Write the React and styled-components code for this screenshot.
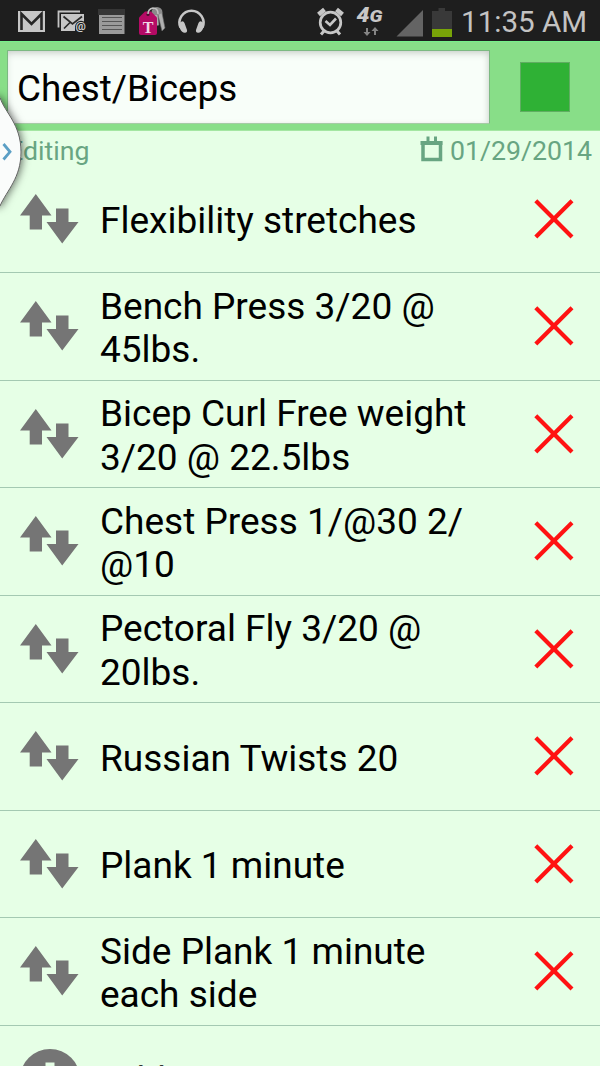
import React from "react";
import styled, { createGlobalStyle } from "styled-components";

const GlobalStyle = createGlobalStyle`
  * {
    box-sizing: border-box;
  }
  body {
    margin: 0;
    overflow: hidden;
    background: #e6ffe6;
    font-family: Roboto, sans-serif;
  }
`;

const Screen = styled.div`
  position: relative;
  width: 600px;
  height: 1066px;
  overflow: hidden;
  background: #e6ffe6;
`;

const StatusBar = styled.div`
  display: flex;
  justify-content: space-between;
  height: 41px;
  background: #1e1e1e;
`;

const StatusGroup = styled.div`
  display: flex;
  svg {
    display: block;
  }
`;

const Clock = styled.div`
  width: 139px;
  font-size: 29.6px;
  line-height: 44px;
  white-space: nowrap;
  color: #c3c3c3;
`;

const Header = styled.div`
  display: flex;
  align-items: flex-start;
  height: 90px;
  padding: 8px 30px 0 7px;
  border-top: 1px solid #77f08a;
  border-bottom: 1px solid #a4e6a2;
  background: #88de88;
`;

const TitleField = styled.div`
  width: 483px;
  height: 74px;
  padding-left: 9px;
  border: 1px solid #7cb982;
  border-bottom-color: #a5cba5;
  background: #f8fef9;
  box-shadow: inset 0 4px 9px -3px #bfc5c0, inset -3px 0 6px -2px #dde5de;
  font-size: 36.8px;
  line-height: 75px;
  white-space: nowrap;
  color: #000;
`;

const ColorSwatch = styled.div`
  width: 50px;
  height: 50px;
  margin: 12px 0 0 30px;
  border: 1px solid #60ad62;
  background: #2fb135;
`;

const SubHeader = styled.div`
  display: flex;
  justify-content: space-between;
  height: 34.6px;
  padding: 0 8px;
  font-size: 26.7px;
  line-height: 40px;
  color: #68a582;
`;

const DateLabel = styled.div`
  display: flex;
  gap: 7px;
  svg {
    margin-top: 4px;
  }
`;

const Row = styled.div`
  display: flex;
  align-items: center;
  height: 107.5px;
  padding: 0 25px 0 20px;
  border-bottom: 1px solid #a4c9b2;
`;

const RowText = styled.div`
  flex: 1;
  margin-left: 21px;
  padding-top: 4px;
  font-size: 37px;
  line-height: 43.4px;
  white-space: pre;
  color: #000;
`;

const DrawerHandle = styled.svg`
  position: absolute;
  left: 0;
  top: 70px;
`;

const exercises = [
  "Flexibility stretches",
  "Bench Press 3/20 @\n45lbs.",
  "Bicep Curl Free weight\n3/20 @ 22.5lbs",
  "Chest Press 1/@30 2/\n@10",
  "Pectoral Fly 3/20 @\n20lbs.",
  "Russian Twists 20",
  "Plank 1 minute",
  "Side Plank 1 minute\neach side",
];

const NotificationIcons = () => (
  <svg width="215" height="41" viewBox="0 0 215 41">
    {/* gmail */}
    <rect x="18" y="11" width="27" height="21" fill="#c6c6c6" />
    <path d="M21.5 30V14L31.5 24 41.5 14V30" fill="none" stroke="#252525" strokeWidth="2.6" />
    {/* mail */}
    <path d="M58.5 27.500V11.500H80" fill="none" stroke="#c4c4c4" strokeWidth="1.800" />
    <path d="M61 14h23v9h-4l-5 3v5H61z" fill="#c6c6c6" />
    <path d="M63.500 16.500l9 7.500L82 16.500M64 28.500l6-6" fill="none" stroke="#292929" strokeWidth="1.700" />
    <circle cx="81" cy="26.500" r="5.800" fill="#1e1e1e" />
    <text x="75.600" y="29.700" fontFamily="Roboto, sans-serif" fontSize="11.500" fontWeight="700" fill="#d0d0d0">@</text>
    {/* note */}
    <rect x="98" y="9" width="27" height="6" fill="#363636" />
    <rect x="99" y="15" width="25.500" height="19" fill="#9a9a9a" />
    <path d="M102 17.500h20M102 21.500h20M102 25.500h20M102 29.500h20" stroke="#555" strokeWidth="1.200" />
    {/* carrier account tag with keys */}
    <circle cx="157" cy="12.500" r="5.500" fill="#8b8b8b" />
    <path d="M153 15l3 11 3-1-1-10M158 15l4 16 3-3-3-15" fill="#b0b0b0" stroke="#666" strokeWidth=".6" />
    <path d="M139 17.500l6-6h6l6 6V33q0 2-2 2h-14q-2 0-2-2z" fill="#b50b65" />
    <circle cx="148" cy="14.500" r="1.600" fill="#4d1030" />
    <path d="M148 14q0-5 5-6 5 0 5 6" fill="none" stroke="#c1c1c1" strokeWidth="1.500" />
    <text x="148" y="32.500" textAnchor="middle" fontFamily="Liberation Serif, serif" fontWeight="700" fontSize="16" fill="#f1d8e6">T</text>
    {/* headphones */}
    <path d="M180.500 27.500A12 12 0 1 1 202.500 27.500" fill="none" stroke="#c6c6c6" strokeWidth="2.600" />
    <path d="M179.500 23q3.500-3.500 5 0l2.500 7q.5 2.500-2 2.800-3 .2-5-4-1.500-3.500-.5-5.800zM203.500 23q-3.500-3.500-5 0l-2.500 7q-.5 2.500 2 2.800 3 .2 5-4 1.500-3.500.5-5.800z" fill="#c6c6c6" />
  </svg>
);

const SystemIcons = () => (
  <svg width="153" height="41" viewBox="308 0 153 41">
    {/* alarm */}
    <g fill="none" stroke="#c6c6c6">
      <circle cx="330.500" cy="22.500" r="10.300" strokeWidth="2.700" />
      <path d="M318.500 14.500l6-5M342.500 14.500l-6-5" strokeWidth="4.500" />
      <path d="M324 31l-3 3.500M337 31l3 3.500" strokeWidth="3" />
      <path d="M325.500 21l4.500 4 6-6.500" strokeWidth="2.600" />
    </g>
    <g fontFamily="Roboto, sans-serif" fontWeight="900" fontStyle="italic" fill="#c8c8c8">
      <text x="356.500" y="21.500" fontSize="19.500" textLength="13" lengthAdjust="spacingAndGlyphs">4</text>
      <text x="369.500" y="21.500" fontSize="17" textLength="13" lengthAdjust="spacingAndGlyphs">G</text>
    </g>
    <path d="M366 28h2v4h2.500l-3.500 4-3.500-4h2.500zM374 35h2v-4h2.500l-3.500-4-3.500 4h2.500z" fill="#858585" />
    <path d="M396.500 36.500h26.500V10z" fill="#646464" />
    <path d="M432 11h6.500V8h6.500v3h7v18h-20z" fill="#393939" />
    <rect x="432" y="29" width="20" height="8" fill="#78a408" />
  </svg>
);

const CalendarIcon = () => (
  <svg width="23" height="28" viewBox="0 0 23 28">
    <path d="M0.500 6h22v4h-22z" fill="#68a582" />
    <path d="M8 1.500v6M15.500 1.500v6" stroke="#68a582" strokeWidth="3" />
    <rect x="3" y="8" width="17.500" height="16.500" fill="none" stroke="#68a582" strokeWidth="3.500" />
  </svg>
);

const ReorderIcon = () => (
  <svg width="59" height="50" viewBox="0 0 59 50">
    <path d="M15.800 0L31.500 21.500H22V35.500H9.700V21.500H0z" fill="#757575" />
    <path d="M36 14.500H48.500V28H58.500L42.200 49.500 26.500 28H36z" fill="#757575" />
  </svg>
);

const RemoveIcon = () => (
  <svg width="42" height="42" viewBox="0 0 42 42">
    <path d="M2.800 2.800L39 39M39 2.800L2.800 39" stroke="#ff1212" strokeWidth="4.200" />
  </svg>
);

const AddIcon = () => (
  <svg width="59" height="62" viewBox="0 0 59 62">
    <circle cx="30" cy="31" r="30" fill="#757575" />
    <path d="M30 14.500v33M13.500 31h33" stroke="#e6ffe6" strokeWidth="9" />
  </svg>
);

const App = () => {
  return (
    <>
      <GlobalStyle />
      <Screen>
        <StatusBar>
          <StatusGroup>
            <NotificationIcons />
          </StatusGroup>
          <StatusGroup>
            <SystemIcons />
            <Clock>11:35 AM</Clock>
          </StatusGroup>
        </StatusBar>
        <Header>
          <TitleField>Chest/Biceps</TitleField>
          <ColorSwatch />
        </Header>
        <SubHeader>
          <span>Editing</span>
          <DateLabel>
            <CalendarIcon />
            01/29/2014
          </DateLabel>
        </SubHeader>
        {exercises.map((name) => (
          <Row key={name}>
            <ReorderIcon />
            <RowText>{name}</RowText>
            <RemoveIcon />
          </Row>
        ))}
        <Row>
          <AddIcon />
          <RowText>Add</RowText>
        </Row>
        <DrawerHandle width="50" height="170" viewBox="0 70 50 170">
          <defs>
            <filter id="handleShadow" x="-50%" y="-20%" width="280%" height="140%">
              <feDropShadow dx="1" dy="0" stdDeviation="4" floodColor="#000" floodOpacity="0.6" />
            </filter>
          </defs>
          <path
            d="M-16 97.500H0C5 113 21 124 21 152 21 178 7 190 0 206H-16z"
            fill="#fafcfb"
            stroke="#606060"
            strokeWidth="1"
            filter="url(#handleShadow)"
          />
          <path d="M3.500 144L10 151.800 3.500 159.500" fill="none" stroke="#5b9fc5" strokeWidth="2.800" />
        </DrawerHandle>
      </Screen>
    </>
  );
};

export default App;
